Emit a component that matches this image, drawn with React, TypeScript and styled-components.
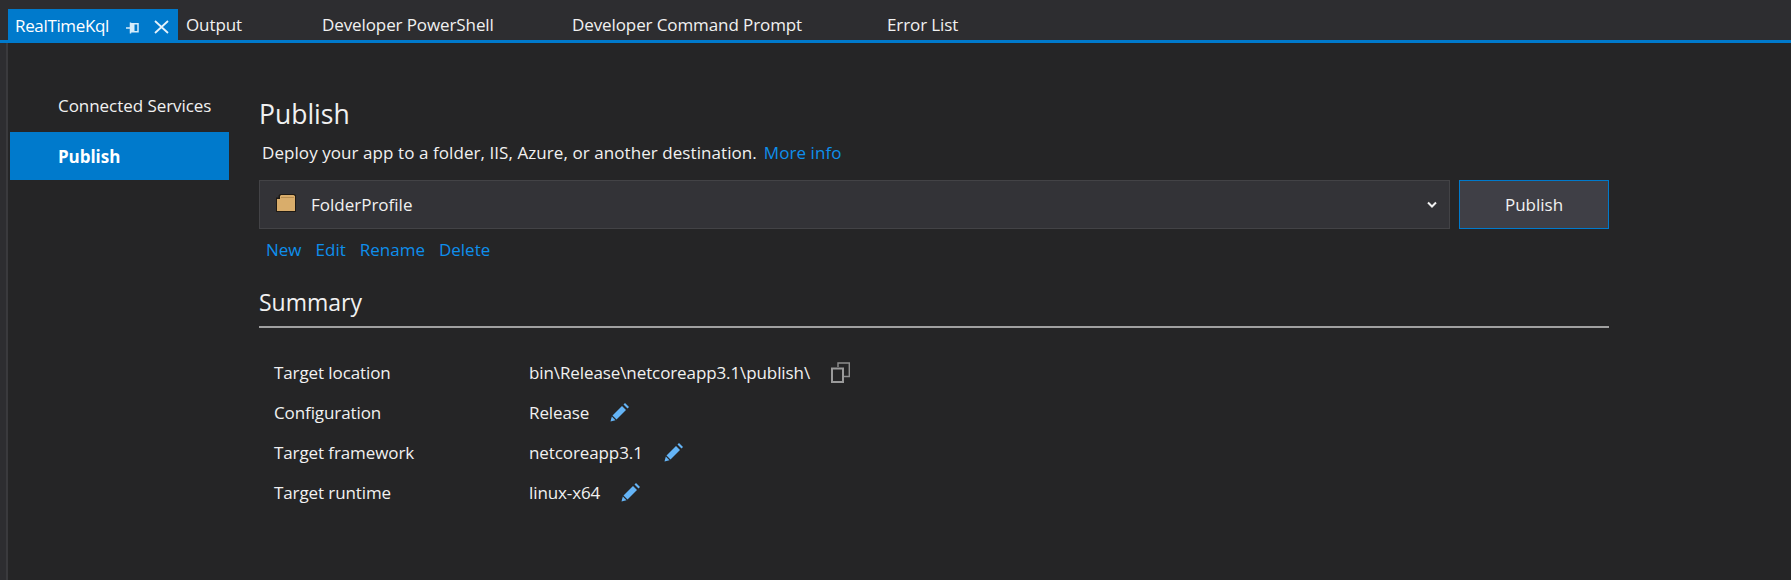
import React from "react";
import styled, { createGlobalStyle } from "styled-components";

const Global = createGlobalStyle`
  html, body { margin: 0; padding: 0; width: 1791px; height: 580px; overflow: hidden; background: #252526; }
  body { font-family: "Open Sans", "Noto Sans", "Liberation Sans", sans-serif; color: #f1f1f1; }
`;

const Page = styled.div`
  width: 1791px;
  height: 580px;
  display: flex;
  flex-direction: column;
  background: #252526;
`;

const TabStrip = styled.div`
  height: 40px;
  box-sizing: content-box;
  padding-left: 8px;
  display: flex;
  align-items: flex-end;
  background: #2d2d30;
  border-bottom: 3px solid #007acc;
`;

const ActiveTab = styled.div`
  width: 170px;
  height: 31px;
  box-sizing: border-box;
  padding: 2px 0 0 7px;
  display: flex;
  align-items: center;
  background: #007acc;
  color: #fff;
  font-size: 17px;
  letter-spacing: -0.35px;
`;

const ActiveLabel = styled.span`
  width: 110px;
`;

const TabIcon = styled.svg`
  flex: none;
  display: block;
`;

const PinIcon = styled(TabIcon)`
  margin: 4px 15px 0 0;
`;

const CloseIcon = styled(TabIcon)`
  margin-top: 3px;
`;

const Tab = styled.div<{ $w: number }>`
  width: ${(p) => p.$w}px;
  height: 31px;
  padding-left: 8px;
  box-sizing: border-box;
  display: flex;
  align-items: center;
  font-size: 17px;
  letter-spacing: -0.1px;
  color: #f1f1f1;
  white-space: nowrap;
`;

const Body = styled.div`
  flex: 1;
  display: flex;
  min-height: 0;
`;

const Gutter = styled.div`
  width: 6px;
  background: #2d2d30;
  border-right: 2px solid #3a3a3d;
  flex: none;
`;

const Sidebar = styled.nav`
  width: 219px;
  margin-left: 2px;
  padding-top: 41px;
  flex: none;
  display: flex;
  flex-direction: column;
`;

const NavItem = styled.div<{ $active?: boolean }>`
  height: 48px;
  padding-left: 48px;
  padding-bottom: ${(p) => (p.$active ? 0 : 6)}px;
  box-sizing: border-box;
  display: flex;
  align-items: center;
  font-size: 17px;
  letter-spacing: -0.05px;
  font-weight: ${(p) => (p.$active ? 700 : 400)};
  background: ${(p) => (p.$active ? "#007acc" : "transparent")};
  color: ${(p) => (p.$active ? "#fff" : "#f1f1f1")};
`;

const Main = styled.main`
  width: 1350px;
  margin-left: 30px;
  padding-top: 54px;
  flex: none;
`;

const Title = styled.h1`
  margin: 0;
  font-size: 26.5px;
  line-height: 34px;
  font-weight: 400;
`;

const Subtitle = styled.div`
  margin: 11px 0 0 3px;
  font-size: 17px;
  line-height: 22px;
  letter-spacing: 0.07px;
  display: flex;
  gap: 7px;
`;

const Link = styled.span`
  color: #0e8fec;
`;

const ProfileRow = styled.div`
  margin-top: 16px;
  display: flex;
  gap: 9px;
`;

const Dropdown = styled.div`
  flex: 1;
  height: 49px;
  box-sizing: border-box;
  padding: 0 12px 0 15px;
  display: flex;
  align-items: center;
  background: #333337;
  border: 1px solid #434346;
  font-size: 17px;
`;

const FolderLabel = styled.span`
  flex: 1;
  margin-left: 14px;
`;

const FolderIcon = styled.svg`
  flex: none;
  margin-top: -3px;
`;

const PublishButton = styled.div`
  width: 150px;
  height: 49px;
  box-sizing: border-box;
  display: flex;
  align-items: center;
  justify-content: center;
  background: #3f3f46;
  border: 1px solid #007acc;
  font-size: 17px;
`;

const Actions = styled.div`
  margin: 10px 0 0 7px;
  display: flex;
  gap: 14px;
  font-size: 17px;
  line-height: 22px;
`;

const SectionHead = styled.h2`
  margin: 26px 0 0;
  padding-bottom: 9px;
  font-size: 23px;
  line-height: 30px;
  font-weight: 400;
  border-bottom: 2px solid #a0a0a0;
`;

const SummaryGrid = styled.div`
  margin: 24px 0 0 15px;
  display: grid;
  grid-template-columns: 255px 1fr;
  grid-auto-rows: 40px;
  align-items: center;
  font-size: 17px;
  letter-spacing: -0.1px;
`;

const Value = styled.div`
  display: flex;
  align-items: center;
  gap: 21px;
`;

const Pin = () => (
  <PinIcon width="14" height="12" viewBox="0 0 14 12" fill="none">
    <path d="M1 6H5M5.5 0.5V11.5M5.5 1.75H13V9.75H5.5" stroke="#d5ecfa" strokeWidth="1.5" />
    <rect x="5.5" y="1.75" width="4" height="8" fill="#d5ecfa" />
  </PinIcon>
);

const Close = () => (
  <CloseIcon width="15" height="14" viewBox="0 0 15 14" fill="none">
    <path d="M1 1L14 13M14 1L1 13" stroke="#e4f2fb" strokeWidth="1.8" />
  </CloseIcon>
);

const Folder = () => (
  <FolderIcon width="22" height="20" viewBox="0 0 22 20">
    <path d="M1 4.5H3.5V2.5L5 1H19L21 2V19H1Z" fill="#1f1a14" />
    <path d="M2 6H5V3L6 2H18.5L20 3V18H2Z" fill="#d9ad6b" />
    <path d="M6 4.5H19" stroke="#b98f52" strokeWidth="1" />
  </FolderIcon>
);

const Chevron = () => (
  <svg width="10" height="8" viewBox="0 0 10 8" fill="none">
    <path d="M1 1.5L5 5.5L9 1.5" stroke="#f1f1f1" strokeWidth="2" />
  </svg>
);

const Copy = () => (
  <svg width="19" height="21" viewBox="0 0 19 21" fill="none">
    <path d="M7 5V1H18.3V14.5H13" stroke="#8f8f8f" strokeWidth="1.4" />
    <rect x="1" y="6.5" width="11" height="13.5" stroke="#9a9a9a" strokeWidth="2" />
  </svg>
);

const Pencil = () => (
  <svg width="19" height="19" viewBox="0 0 19 19">
    <path d="M12 3L16 7L6.5 16.5L2.5 12.5Z" fill="#64b4f6" />
    <path d="M13.5 1.5L15 0L19 4L17.5 5.5Z" fill="#64b4f6" />
    <path d="M1.8 13.5L5.5 17.2L0.5 18.5Z" fill="#64b4f6" />
  </svg>
);

export default function App() {
  return (
    <Page>
      <Global />
      <TabStrip>
        <ActiveTab>
          <ActiveLabel>RealTimeKql</ActiveLabel>
          <Pin />
          <Close />
        </ActiveTab>
        <Tab $w={136}>Output</Tab>
        <Tab $w={250}>Developer PowerShell</Tab>
        <Tab $w={315}>Developer Command Prompt</Tab>
        <Tab $w={120}>Error List</Tab>
      </TabStrip>
      <Body>
        <Gutter />
        <Sidebar>
          <NavItem>Connected Services</NavItem>
          <NavItem $active>Publish</NavItem>
        </Sidebar>
        <Main>
          <Title>Publish</Title>
          <Subtitle>
            <span>Deploy your app to a folder, IIS, Azure, or another destination.</span>
            <Link>More info</Link>
          </Subtitle>
          <ProfileRow>
            <Dropdown>
              <Folder />
              <FolderLabel>FolderProfile</FolderLabel>
              <Chevron />
            </Dropdown>
            <PublishButton>Publish</PublishButton>
          </ProfileRow>
          <Actions>
            <Link>New</Link>
            <Link>Edit</Link>
            <Link>Rename</Link>
            <Link>Delete</Link>
          </Actions>
          <SectionHead>Summary</SectionHead>
          <SummaryGrid>
            <div>Target location</div>
            <Value>
              <span>bin\Release\netcoreapp3.1\publish\</span>
              <Copy />
            </Value>
            <div>Configuration</div>
            <Value>
              <span>Release</span>
              <Pencil />
            </Value>
            <div>Target framework</div>
            <Value>
              <span>netcoreapp3.1</span>
              <Pencil />
            </Value>
            <div>Target runtime</div>
            <Value>
              <span>linux-x64</span>
              <Pencil />
            </Value>
          </SummaryGrid>
        </Main>
      </Body>
    </Page>
  );
}
